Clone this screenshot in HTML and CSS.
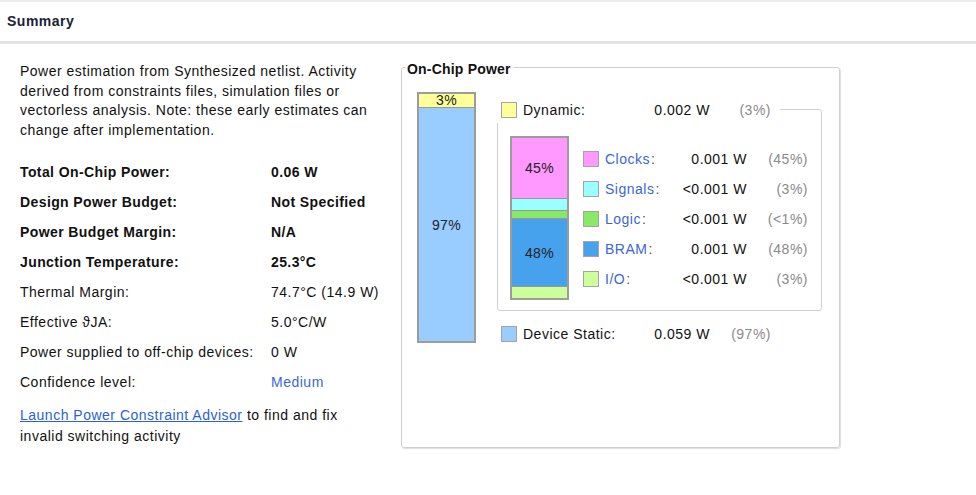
FILE: index.html
```html
<!DOCTYPE html>
<html>
<head>
<meta charset="utf-8">
<link rel="stylesheet" href="styles.css">
</head>
<body>
<div class="panel">
  <div class="header">Summary</div>
  <div class="content">
    <div class="left">
      <p class="desc">Power estimation from Synthesized netlist. Activity derived from constraints files, simulation files or vectorless analysis. Note: these early estimates can change after implementation.</p>
      <div class="facts">
        <div class="k b">Total On-Chip Power:</div><div class="v b">0.06 W</div>
        <div class="k b">Design Power Budget:</div><div class="v b">Not Specified</div>
        <div class="k b">Power Budget Margin:</div><div class="v b">N/A</div>
        <div class="k b">Junction Temperature:</div><div class="v b">25.3°C</div>
        <div class="k">Thermal Margin:</div><div class="v">74.7°C (14.9 W)</div>
        <div class="k">Effective ϑJA:</div><div class="v">5.0°C/W</div>
        <div class="k">Power supplied to off-chip devices:</div><div class="v">0 W</div>
        <div class="k">Confidence level:</div><div class="v lnk">Medium</div>
      </div>
      <p class="advice"><a class="ulink" href="#">Launch Power Constraint Advisor</a> <span>to find and fix</span> <span class="nw">invalid switching activity</span></p>
    </div>
    <fieldset class="onchip">
      <legend>On-Chip Power</legend>
      <div class="chip-body">
        <div class="total-bar">
          <div class="seg c-dyn tb-dyn">3%</div>
          <div class="seg c-static tb-static">97%</div>
        </div>
        <div class="breakdown">
          <div class="dyn-box">
            <div class="main-row dyn-head">
              <span class="sw c-dyn"></span>
              <span class="ml">Dynamic:</span>
              <span class="mv">0.002 W</span>
              <span class="mp">(3%)</span>
            </div>
            <div class="dyn-inner">
              <div class="stack">
                <div class="seg c-clk st-clk">45%</div>
                <div class="seg c-sig st-sig"></div>
                <div class="seg c-log st-log"></div>
                <div class="seg c-bram st-bram">48%</div>
                <div class="seg c-io st-io"></div>
              </div>
              <div class="legend">
                <div class="lrow"><span class="sw c-clk"></span><span class="ll"><span class="lnk">Clocks</span><span class="colon">:</span></span><span class="lv">0.001 W</span><span class="lp">(45%)</span></div>
                <div class="lrow"><span class="sw c-sig"></span><span class="ll"><span class="lnk">Signals</span><span class="colon">:</span></span><span class="lv">&lt;0.001 W</span><span class="lp">(3%)</span></div>
                <div class="lrow"><span class="sw c-log"></span><span class="ll"><span class="lnk">Logic</span><span class="colon">:</span></span><span class="lv">&lt;0.001 W</span><span class="lp">(&lt;1%)</span></div>
                <div class="lrow"><span class="sw c-bram"></span><span class="ll"><span class="lnk">BRAM</span><span class="colon">:</span></span><span class="lv">0.001 W</span><span class="lp">(48%)</span></div>
                <div class="lrow"><span class="sw c-io"></span><span class="ll"><span class="lnk">I/O</span><span class="colon">:</span></span><span class="lv">&lt;0.001 W</span><span class="lp">(3%)</span></div>
              </div>
            </div>
          </div>
          <div class="main-row static-row">
            <span class="sw c-static"></span>
            <span class="ml">Device Static:</span>
            <span class="mv">0.059 W</span>
            <span class="mp">(97%)</span>
          </div>
        </div>
      </div>
    </fieldset>
  </div>
</div>
</body>
</html>
```

FILE: styles.css
```css
* { box-sizing: border-box; }
html, body { margin: 0; padding: 0; background: #fff; }
body {
  font-family: "Liberation Sans", Arial, sans-serif;
  font-size: 14px;
  letter-spacing: 0.5px;
  color: #111;
  width: 976px;
  height: 495px;
  overflow: hidden;
}
.header {
  border-top: 2px solid #ececec;
  height: 44px;
  line-height: 39px;
  padding-left: 7px;
  font-size: 14px;
  font-weight: bold;
  color: #1b2236;
  border-bottom: 3px solid #e4e4e4;
}
.content {
  display: flex;
  align-items: flex-start;
  padding-left: 20px;
}
.left { width: 379px; }
.desc {
  margin: 18px 0 0 0;
  line-height: 19.7px;
}
.facts {
  margin-top: 16px;
  display: grid;
  grid-template-columns: 251px auto;
  grid-auto-rows: 30px;
  align-items: center;
  white-space: nowrap;
}
.b { font-weight: bold; letter-spacing: 0.4px; }
.lnk { color: #3b66dd; }
.advice {
  margin: 8px 0 0 0;
  max-width: 355px;
  line-height: 21px;
}
.nw { white-space: nowrap; }
.ulink { color: #2a62d8; text-decoration: underline; }

.onchip {
  margin: 12px 0 0 2px;
  padding: 0;
  width: 439px;
  border: 1px solid #cfcfcf;
  border-radius: 3px;
  box-shadow: 1px 1px 1px #dedede;
  min-width: 0;
}
.onchip legend {
  font-weight: bold;
  letter-spacing: 0.2px;
  padding: 5px 2px 0 2px;
  margin-left: 3px;
  line-height: 17px;
}
.chip-body {
  display: flex;
  align-items: flex-start;
  padding: 14px 0 0 15px;
  height: 369px;
  white-space: nowrap;
}
.seg {
  display: flex;
  align-items: center;
  justify-content: center;
  color: #222;
  letter-spacing: 0.3px;
  border-bottom: 1px solid #999;
}
.seg:last-child { border-bottom: 0; }
.total-bar {
  width: 59px;
  border: 2px solid #9c9c9c;
  display: flex;
  flex-direction: column;
}
.tb-dyn { height: 14px; line-height: 13px; }
.tb-static { height: 233px; }

.c-dyn { background: #ffff99; }
.c-static { background: #99ccff; }
.c-clk { background: #ff99ff; }
.c-sig { background: #99ffff; }
.c-log { background: #88e868; }
.c-bram { background: #47a2ee; }
.c-io { background: #ccff99; }

.breakdown { margin-left: 21px; }
.dyn-box {
  margin-top: 17px;
  width: 325px;
  border: 1px solid #cfcfcf;
  border-radius: 3px;
  padding: 0 0 10px 12px;
}
.main-row {
  display: flex;
  align-items: center;
  height: 26px;
  padding-left: 4px;
}
.dyn-head {
  margin: -13px 0 0 -13px;
  width: 283px;
  background: #fff;
}
.sw {
  width: 16px;
  height: 16px;
  border: 1px solid #a4a4a4;
  flex: none;
}
.ml { margin-left: 6px; width: 110px; }
.mv { width: 77px; text-align: right; }
.mp { width: 61px; text-align: right; color: #8a8a8a; }
.dyn-inner {
  display: flex;
  align-items: flex-start;
  margin-top: 13px;
}
.stack {
  width: 59px;
  border: 2px solid #9c9c9c;
  display: flex;
  flex-direction: column;
}
.st-clk { height: 61px; }
.st-sig { height: 12px; }
.st-log { height: 8px; }
.st-bram { height: 68px; }
.st-io { height: 11px; }
.legend {
  margin: 8px 0 0 14px;
}
.lrow {
  display: flex;
  align-items: center;
  height: 30px;
}
.ll { margin-left: 6px; width: 70px; }
.colon { color: #555; margin-left: 1px; }
.lv { width: 72px; text-align: right; }
.lp { width: 61px; text-align: right; color: #8a8a8a; }
.static-row { margin-top: 10px; margin-left: 0; }
```
